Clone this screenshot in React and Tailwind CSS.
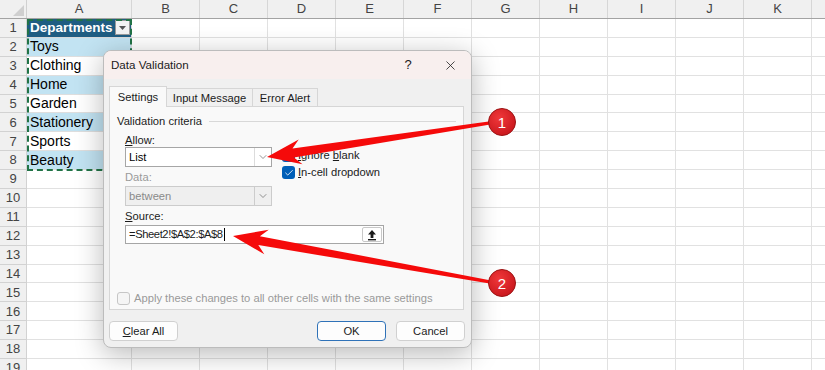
import { X, ChevronDown, Check } from 'lucide-react'

const LETTERS = ['A', 'B', 'C', 'D', 'E', 'F', 'G', 'H', 'I', 'J', 'K', '']
const ITEMS = ['Departments', 'Toys', 'Clothing', 'Home', 'Garden', 'Stationery', 'Sports', 'Beauty']
const ROWS = Array.from({ length: 19 }, (_, i) => i + 1)

const colW = i => (i === 0 ? 'w-[105px]' : 'w-[68px]')

function arrowPoints(tip, tail, headLen, headW, near, far) {
  const dx = tail[0] - tip[0]
  const dy = tail[1] - tip[1]
  const L = Math.hypot(dx, dy)
  const ux = dx / L, uy = dy / L
  const nx = -uy, ny = ux
  const at = (d, w) => [tip[0] + ux * d + nx * w, tip[1] + uy * d + ny * w]
  const pts = [
    tip,
    at(headLen, headW),
    at(headLen * 0.78, near),
    [tail[0] + nx * far, tail[1] + ny * far],
    [tail[0] - nx * far, tail[1] - ny * far],
    at(headLen * 0.78, -near),
    at(headLen, -headW),
  ]
  return pts.map(p => p[0].toFixed(1) + ',' + p[1].toFixed(1)).join(' ')
}

function Cell({ row, col }) {
  if (col === 0 && row === 1) {
    return (
      <div className="w-[105px] shrink-0 bg-[#1f5d82] border-r border-b border-[#d9d9d9] flex items-center justify-between pl-[3px] pr-[1px]">
        <span className="text-white font-bold text-[13.5px]">Departments</span>
        <span className="w-[15px] h-[15px] bg-[#f3f3f3] border border-[#9a9a9a] flex items-center justify-center">
          <svg width="7" height="4" viewBox="0 0 7 4"><path d="M0 0h7L3.5 4z" fill="#555" /></svg>
        </span>
      </div>
    )
  }
  if (col === 0 && row <= 8) {
    const band = row % 2 === 0 ? 'bg-[#c2e3f2]' : 'bg-white'
    return (
      <div className={`w-[105px] shrink-0 ${band} border-r border-b border-[#dedede] flex items-center pl-[3px]`}>
        <span className="text-[14px] text-black">{ITEMS[row - 1]}</span>
      </div>
    )
  }
  return <div className={`${colW(col)} shrink-0 border-r border-b border-[#e1e1e1]`} />
}

function Box({ checked, disabled }) {
  if (checked) {
    return (
      <span className="w-[13px] h-[13px] rounded-[3px] bg-[#005fb8] flex items-center justify-center">
        <Check size={10} color="white" strokeWidth={2} />
      </span>
    )
  }
  return <span className={`w-[13px] h-[13px] rounded-[3px] border ${disabled ? 'border-[#c6c6c6] bg-[#f5f5f5]' : 'border-[#8a8a8a] bg-white'}`} />
}

function Combo({ value, disabled }) {
  return (
    <div className={`h-[20px] w-[147px] flex border ${disabled ? 'border-[#cccccc] bg-[#efefef]' : 'border-[#a6a6a6] bg-white'}`}>
      <span className={`flex-1 pl-[3px] leading-[18px] ${disabled ? 'text-[#8a8a8a]' : 'text-black'}`}>{value}</span>
      <span className={`w-[17px] flex items-center justify-center border-l ${disabled ? 'border-[#cccccc]' : 'border-[#dcdcdc]'}`}>
        <ChevronDown size={12} color="#666" strokeWidth={1.4} />
      </span>
    </div>
  )
}

function Dialog() {
  return (
    <div className="absolute left-[103px] top-[50px] w-[369px] h-[298px] rounded-[8px] border border-[#bcbcbc] bg-[#f0f0f0] shadow-[0_6px_28px_rgba(0,0,0,0.28)] text-[11.2px] text-[#1b1b1b] font-['Liberation_Sans',sans-serif] overflow-hidden">
      <div className="h-[28px] bg-[#f8efee] flex items-center pl-[7px]">
        <span className="text-[11.6px]">Data Validation</span>
        <span className="ml-auto w-[20px] mr-[17px] text-center text-[13px]">?</span>
        <span className="w-[30px] flex justify-center mr-[6px]"><X size={15} strokeWidth={1.3} color="#222" /></span>
      </div>

      <div className="pl-[5px] pr-[7px] pt-[7px]">
        <div className="flex items-end h-[21px] relative z-10">
          <div className="w-[58px] h-[21px] bg-[#f9f9f9] border border-b-0 border-[#d6d6d6] flex items-center justify-center">Settings</div>
          <div className="w-[86px] h-[19px] border border-l-0 border-b-0 border-[#d6d6d6] flex items-center justify-center">Input Message</div>
          <div className="w-[65px] h-[19px] border border-l-0 border-b-0 border-[#d6d6d6] flex items-center justify-center">Error Alert</div>
        </div>
        <div className="h-[204px] -mt-px bg-[#f9f9f9] border border-[#d6d6d6] px-[7px] pt-[5px]">
          <div className="h-[18px] flex items-center gap-[7px]">
            <span>Validation criteria</span>
            <span className="flex-1 h-px bg-[#d8d8d8]" />
          </div>
          <div className="pl-[8px]">
            <div className="flex gap-[10px]">
              <div className="flex flex-col">
                <span className="h-[17px] leading-[20px]"><u>A</u>llow:</span>
                <Combo value="List" />
                <span className="h-[19px] leading-[20px] text-[#9a9a9a]">Data:</span>
                <Combo value="between" disabled />
              </div>
              <div className="flex flex-col mt-[17px]">
                <div className="h-[17px] flex items-center gap-[3px]"><Box checked /><span><u>I</u>gnore <u>b</u>lank</span></div>
                <div className="h-[17px] flex items-center gap-[3px]"><Box checked /><span><u>I</u>n-cell dropdown</span></div>
              </div>
            </div>
            <span className="block h-[19px] leading-[20px]"><u>S</u>ource:</span>
            <div className="h-[19px] w-[259px] flex border border-[#a6a6a6] bg-white">
              <span className="flex-1 pl-[3px] leading-[17px] flex items-center tracking-[-0.4px]">=Sheet2!$A$2:$A$8<span className="w-px h-[13px] bg-black ml-px" /></span>
              <span className="w-[20px] my-[1px] mr-[1px] border border-[#c8c8c8] rounded-[2px] flex items-center justify-center">
                <svg width="10" height="12" viewBox="0 0 10 12">
                  <path d="M5 1L9 5.5H6.4V9H3.6V5.5H1z" fill="#1b1b1b" />
                  <rect x="1" y="10" width="8" height="1.4" fill="#1b1b1b" />
                </svg>
              </span>
            </div>
          </div>
          <div className="mt-[46px] flex items-center gap-[4px] text-[#9a9a9a]">
            <Box disabled />
            <span className="whitespace-nowrap">Apply these changes to all other cells with the same settings</span>
          </div>
        </div>
        <div className="flex mt-[11px] h-[20px]">
          <button className="w-[69px] h-[20px] bg-[#fdfdfd] border border-[#d0d0d0] rounded-[4px]"><u>C</u>lear All</button>
          <button className="ml-auto w-[69px] h-[20px] bg-[#fdfdfd] border border-[#2f72b8] rounded-[4px]">OK</button>
          <button className="ml-[10px] mr-[-1px] w-[69px] h-[20px] bg-[#fdfdfd] border border-[#d0d0d0] rounded-[4px]">Cancel</button>
        </div>
      </div>
    </div>
  )
}

function Callout({ cx, cy, n }) {
  return (
    <g>
      <circle cx={cx} cy={cy} r="13.5" fill="url(#cg)" stroke="#9c1414" strokeWidth="1" />
      <text x={cx} y={cy + 5.5} textAnchor="middle" fontSize="15" fill="white" fontFamily="Liberation Sans, sans-serif">{n}</text>
    </g>
  )
}

export default function App() {
  return (
    <div className="relative w-[825px] h-[370px] overflow-hidden bg-white font-['Liberation_Sans',sans-serif]">
      <div className="flex h-[19px] bg-[#f0f0f0] border-b border-[#a3a3a3]">
        <div className="w-[27px] shrink-0 border-r border-[#d0d0d0] flex items-end justify-end p-[2px]">
          <svg width="11" height="11" viewBox="0 0 11 11"><path d="M11 0V11H0z" fill="#cfcfcf" /></svg>
        </div>
        {LETTERS.map((l, i) => (
          <div key={i} className={`${colW(i)} shrink-0 border-r border-[#d6d6d6] flex items-center justify-center text-[13px] text-[#444]`}>{l}</div>
        ))}
      </div>
      {ROWS.map(r => (
        <div key={r} className="flex h-[18.9px]">
          <div className="w-[27px] shrink-0 bg-[#f0f0f0] border-r border-b border-[#d2d2d2] flex items-center justify-center text-[13px] text-[#444]">{r}</div>
          {LETTERS.map((l, i) => <Cell key={i} row={r} col={i} />)}
        </div>
      ))}

      <div className="absolute left-[27px] top-[19px] w-[105px] h-[152px] border-2 border-dashed border-[#217346] pointer-events-none" />

      <Dialog />

      <svg className="absolute inset-0 pointer-events-none" width="825" height="370">
        <defs>
          <radialGradient id="cg" cx="40%" cy="35%" r="70%">
            <stop offset="0%" stopColor="#f0383a" />
            <stop offset="100%" stopColor="#c8161c" />
          </radialGradient>
        </defs>
        <polygon points={arrowPoints([267, 157], [496, 122], 34, 12.5, 4.5, 1.6)} fill="#f50a0a" />
        <polygon points={arrowPoints([233, 236], [496, 283], 34, 12.5, 4.5, 1.6)} fill="#f50a0a" />
        <Callout cx={502} cy={122} n="1" />
        <Callout cx={502} cy={283} n="2" />
      </svg>
    </div>
  )
}
